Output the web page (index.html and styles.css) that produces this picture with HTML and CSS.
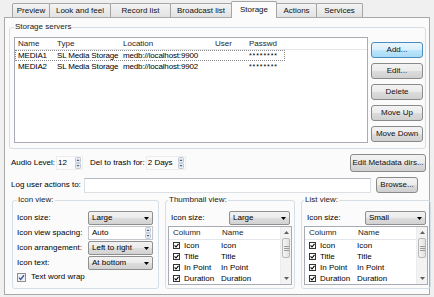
FILE: index.html
```html
<!DOCTYPE html>
<html>
<head>
<meta charset="utf-8">
<link rel="stylesheet" href="styles.css">
</head>
<body>
<div class="tabbar">
  <div class="tab t1">Preview</div>
  <div class="tab t2">Look and feel</div>
  <div class="tab t3">Record list</div>
  <div class="tab t4">Broadcast list</div>
  <div class="tab t5 active">Storage</div>
  <div class="tab t6">Actions</div>
  <div class="tab t7">Services</div>
</div>
<div class="pane">
  <fieldset class="group storage">
    <legend>Storage servers</legend>
    <div class="storage-body">
      <div class="servers">
        <div class="srv-row srv-head">
          <span>Name</span><span>Type</span><span>Location</span><span>User</span><span>Passwd</span>
        </div>
        <div class="srv-row current">
          <span>MEDIA1</span><span>SL Media Storage</span><span>medb://localhost:9900</span><span></span><span class="pw">********</span>
        </div>
        <div class="srv-row">
          <span>MEDIA2</span><span>SL Media Storage</span><span>medb://localhost:9902</span><span></span><span class="pw">********</span>
        </div>
      </div>
      <div class="btn-col">
        <div class="btn default">Add...</div>
        <div class="btn">Edit...</div>
        <div class="btn">Delete</div>
        <div class="btn">Move Up</div>
        <div class="btn">Move Down</div>
      </div>
    </div>
  </fieldset>

  <div class="line audio-line">
    <span class="lbl audio-lbl">Audio Level:</span>
    <div class="spin s-audio">
      <span>12</span>
      <svg class="spin-arrows" width="6" height="12" viewBox="0 0 6 12"><rect x="0.5" y="0.5" width="5" height="5.2" rx="1" fill="#e9eef4" stroke="#bcc6d3"/><rect x="0.5" y="6.3" width="5" height="5.2" rx="1" fill="#e9eef4" stroke="#bcc6d3"/><path d="M1.5 4 L3 2.2 L4.5 4 Z" fill="#4b5b7a"/><path d="M1.5 8 L3 9.8 L4.5 8 Z" fill="#4b5b7a"/></svg>
    </div>
    <span class="lbl trash-lbl">Del to trash for:</span>
    <div class="spin s-trash">
      <span>2 Days</span>
      <svg class="spin-arrows" width="6" height="12" viewBox="0 0 6 12"><rect x="0.5" y="0.5" width="5" height="5.2" rx="1" fill="#e9eef4" stroke="#bcc6d3"/><rect x="0.5" y="6.3" width="5" height="5.2" rx="1" fill="#e9eef4" stroke="#bcc6d3"/><path d="M1.5 4 L3 2.2 L4.5 4 Z" fill="#4b5b7a"/><path d="M1.5 8 L3 9.8 L4.5 8 Z" fill="#4b5b7a"/></svg>
    </div>
    <div class="btn meta">Edit Metadata dirs...</div>
  </div>

  <div class="line log-line">
    <span class="lbl log-lbl">Log user actions to:</span>
    <div class="textinput"></div>
    <div class="btn browse">Browse...</div>
  </div>

  <div class="views">
    <fieldset class="group iconview">
      <legend>Icon view:</legend>
      <div class="form">
        <span class="lbl">Icon size:</span>
        <div class="combo"><span>Large</span><svg width="5" height="3" viewBox="0 0 5 3"><path d="M0 0H5L2.5 3Z" fill="#000"/></svg></div>
        <span class="lbl">Icon view spacing:</span>
        <div class="spinbox"><span>Auto</span><svg class="spin-arrows" width="6" height="12" viewBox="0 0 6 12"><rect x="0.5" y="0.5" width="5" height="5.2" rx="1" fill="#e9eef4" stroke="#bcc6d3"/><rect x="0.5" y="6.3" width="5" height="5.2" rx="1" fill="#e9eef4" stroke="#bcc6d3"/><path d="M1.5 4 L3 2.2 L4.5 4 Z" fill="#4b5b7a"/><path d="M1.5 8 L3 9.8 L4.5 8 Z" fill="#4b5b7a"/></svg></div>
        <span class="lbl">Icon arrangement:</span>
        <div class="combo"><span>Left to right</span><svg width="5" height="3" viewBox="0 0 5 3"><path d="M0 0H5L2.5 3Z" fill="#000"/></svg></div>
        <span class="lbl">Icon text:</span>
        <div class="combo"><span>At bottom</span><svg width="5" height="3" viewBox="0 0 5 3"><path d="M0 0H5L2.5 3Z" fill="#000"/></svg></div>
      </div>
      <div class="check-line">
        <svg width="9" height="9" viewBox="0 0 9 9"><rect x="0.5" y="0.5" width="8" height="8" fill="#eef1f6" stroke="#8e8f8f"/><path d="M2 4.6 L3.7 6.5 L7 2.2" fill="none" stroke="#3c5a9a" stroke-width="1.4"/></svg>
        <span>Text word wrap</span>
      </div>
    </fieldset>

    <fieldset class="group subview">
      <legend>Thumbnail view:</legend>
      <div class="size-line">
        <span class="lbl">Icon size:</span>
        <div class="combo small-combo"><span>Large</span><svg width="5" height="3" viewBox="0 0 5 3"><path d="M0 0H5L2.5 3Z" fill="#000"/></svg></div>
      </div>
      <div class="coltable">
        <div class="ct-main">
          <div class="ct-row ct-head"><span>Column</span><span>Name</span></div>
          <div class="ct-row"><span><svg class="cb" width="7" height="7" viewBox="0 0 7 7"><rect x="0.5" y="0.5" width="6" height="6" fill="#fff" stroke="#333"/><path d="M1.6 3.4 L3 5 L5.5 1.8" fill="none" stroke="#000" stroke-width="1.1"/></svg>Icon</span><span>Icon</span></div>
          <div class="ct-row"><span><svg class="cb" width="7" height="7" viewBox="0 0 7 7"><rect x="0.5" y="0.5" width="6" height="6" fill="#fff" stroke="#333"/><path d="M1.6 3.4 L3 5 L5.5 1.8" fill="none" stroke="#000" stroke-width="1.1"/></svg>Title</span><span>Title</span></div>
          <div class="ct-row"><span><svg class="cb" width="7" height="7" viewBox="0 0 7 7"><rect x="0.5" y="0.5" width="6" height="6" fill="#fff" stroke="#333"/><path d="M1.6 3.4 L3 5 L5.5 1.8" fill="none" stroke="#000" stroke-width="1.1"/></svg>In Point</span><span>In Point</span></div>
          <div class="ct-row"><span><svg class="cb" width="7" height="7" viewBox="0 0 7 7"><rect x="0.5" y="0.5" width="6" height="6" fill="#fff" stroke="#333"/><path d="M1.6 3.4 L3 5 L5.5 1.8" fill="none" stroke="#000" stroke-width="1.1"/></svg>Duration</span><span>Duration</span></div>
        </div>
        <div class="vscroll">
          <div class="sb-btn"><svg width="5" height="3" viewBox="0 0 5 3"><path d="M0 3H5L2.5 0Z" fill="#606060"/></svg></div>
          <div class="sb-thumb"><svg width="5" height="5" viewBox="0 0 5 5"><path d="M0 0.5H5M0 2.5H5M0 4.5H5" stroke="#9a9a9a"/></svg></div>
          <div class="sb-track"></div>
          <div class="sb-btn"><svg width="5" height="3" viewBox="0 0 5 3"><path d="M0 0H5L2.5 3Z" fill="#606060"/></svg></div>
        </div>
      </div>
    </fieldset>

    <fieldset class="group subview">
      <legend>List view:</legend>
      <div class="size-line">
        <span class="lbl">Icon size:</span>
        <div class="combo small-combo"><span>Small</span><svg width="5" height="3" viewBox="0 0 5 3"><path d="M0 0H5L2.5 3Z" fill="#000"/></svg></div>
      </div>
      <div class="coltable">
        <div class="ct-main">
          <div class="ct-row ct-head"><span>Column</span><span>Name</span></div>
          <div class="ct-row"><span><svg class="cb" width="7" height="7" viewBox="0 0 7 7"><rect x="0.5" y="0.5" width="6" height="6" fill="#fff" stroke="#333"/><path d="M1.6 3.4 L3 5 L5.5 1.8" fill="none" stroke="#000" stroke-width="1.1"/></svg>Icon</span><span>Icon</span></div>
          <div class="ct-row"><span><svg class="cb" width="7" height="7" viewBox="0 0 7 7"><rect x="0.5" y="0.5" width="6" height="6" fill="#fff" stroke="#333"/><path d="M1.6 3.4 L3 5 L5.5 1.8" fill="none" stroke="#000" stroke-width="1.1"/></svg>Title</span><span>Title</span></div>
          <div class="ct-row"><span><svg class="cb" width="7" height="7" viewBox="0 0 7 7"><rect x="0.5" y="0.5" width="6" height="6" fill="#fff" stroke="#333"/><path d="M1.6 3.4 L3 5 L5.5 1.8" fill="none" stroke="#000" stroke-width="1.1"/></svg>In Point</span><span>In Point</span></div>
          <div class="ct-row"><span><svg class="cb" width="7" height="7" viewBox="0 0 7 7"><rect x="0.5" y="0.5" width="6" height="6" fill="#fff" stroke="#333"/><path d="M1.6 3.4 L3 5 L5.5 1.8" fill="none" stroke="#000" stroke-width="1.1"/></svg>Duration</span><span>Duration</span></div>
        </div>
        <div class="vscroll">
          <div class="sb-btn"><svg width="5" height="3" viewBox="0 0 5 3"><path d="M0 3H5L2.5 0Z" fill="#606060"/></svg></div>
          <div class="sb-thumb"><svg width="5" height="5" viewBox="0 0 5 5"><path d="M0 0.5H5M0 2.5H5M0 4.5H5" stroke="#9a9a9a"/></svg></div>
          <div class="sb-track"></div>
          <div class="sb-btn"><svg width="5" height="3" viewBox="0 0 5 3"><path d="M0 0H5L2.5 3Z" fill="#606060"/></svg></div>
        </div>
      </div>
    </fieldset>
  </div>
</div>
</body>
</html>
```

FILE: styles.css
```css
* { box-sizing: border-box; }
html, body { margin: 0; padding: 0; }
body {
  width: 434px;
  height: 297px;
  overflow: hidden;
  background: #f0f0f0;
  font-family: "Liberation Sans", Arial, sans-serif;
  font-size: 8px;
  line-height: 10px;
  color: #000;
}

/* ---------- tabs ---------- */
.tabbar {
  display: flex;
  align-items: flex-start;
  height: 17px;
  padding: 3px 0 0 12px;
  position: relative;
  z-index: 2;
}
.tab {
  height: 14px;
  margin-right: -1px;
  border: 1px solid #a5a5a5;
  border-bottom: none;
  border-radius: 2px 2px 0 0;
  background: linear-gradient(#f4f4f4, #e2e2e2);
  text-align: center;
  line-height: 13px;
  color: #111;
  flex-shrink: 0;
}
.t1 { width: 38px; }
.t2 { width: 62px; }
.t3 { width: 61px; }
.t4 { width: 62px; }
.t5 { width: 46px; }
.t6 { width: 41px; }
.t7 { width: 47px; }
.tab.active {
  height: 17px;
  margin-top: -2px;
  background: #fbfbfb;
  line-height: 15px;
}

/* ---------- pane ---------- */
.pane {
  margin-left: 4px;
  width: 426px;
  height: 278px;
  border: 1px solid #a9a9a9;
  background: #fbfbfb;
  padding: 4px 3px 0 4px;
  position: relative;
  z-index: 1;
}

.group {
  margin: 0;
  border: 1px solid #d5dfe5;
  border-radius: 3px;
  padding: 0 4px;
  min-width: 0;
}
.group legend {
  padding: 0 1px;
  line-height: 10px;
  color: #1a1a1a;
}

/* storage */
.storage { width: 417px; height: 127px; padding: 5px 2px 0 4px; }
.storage-body { display: flex; gap: 3px; }
.servers {
  width: 354px;
  height: 106px;
  border: 1px solid #a7abb3;
  background: #fff;
}
.srv-row {
  display: grid;
  grid-template-columns: 39px 66px 92px 34px 38px;
  height: 11px;
  line-height: 11px;
  white-space: nowrap;
  letter-spacing: -0.15px;
}
.srv-row span { padding-left: 3px; overflow: hidden; }
.srv-head {
  height: 12px;
  line-height: 12px;
  border-bottom: 1px solid #e3e6ea;
  color: #1e1e1e;
  letter-spacing: 0;
}
.srv-row.current {
  width: 270px;
  outline: 1px dotted #8a8a8a;
  outline-offset: -1px;
}
.srv-row .pw { letter-spacing: 0.9px; font-size: 7px; }

.btn-col {
  display: flex;
  flex-direction: column;
  gap: 5px;
  padding-top: 5px;
}
.btn {
  width: 52px;
  height: 16px;
  border: 1px solid #8a8a8a;
  border-radius: 3px;
  background: linear-gradient(#f3f3f3 0%, #ebebeb 48%, #dcdcdc 52%, #d0d0d0 100%);
  display: flex;
  align-items: center;
  justify-content: center;
  color: #111;
  white-space: nowrap;
  flex-shrink: 0;
}
.btn.default {
  border-color: #4a8ec0;
  background: linear-gradient(#eaf6fd 0%, #d9f0fc 48%, #bee6fd 52%, #a9daf5 100%);
}

/* audio line */
.line { display: flex; align-items: center; }
.lbl { white-space: nowrap; flex-shrink: 0; }
.audio-line { margin-top: 5px; height: 18px; padding-left: 2px; }
.audio-lbl { margin-right: 1px; }
.spin {
  display: flex;
  align-items: center;
  justify-content: space-between;
  height: 14px;
  padding: 0 1px 0 1px;
  border: 1px solid #ededed;
  flex-shrink: 0;
}
.s-audio { width: 27px; }
.trash-lbl { margin-left: 7px; margin-right: 1px; }
.s-trash { width: 40px; }
.btn.meta { width: 76px; height: 18px; margin-left: auto; }

/* log line */
.log-line { margin-top: 5px; height: 16px; padding-left: 2px; }
.log-lbl { width: 73px; }
.textinput {
  width: 287px;
  height: 15px;
  border: 1px solid #dcdfe4;
  border-top-color: #b5b9c0;
  background: #fff;
}
.btn.browse { width: 42px; margin-left: 5px; }

/* views */
.views {
  display: flex;
  gap: 6px;
  margin-top: 2px;
  padding-left: 3px;
}
.views .group { flex-shrink: 0; height: 94px; }
.iconview { width: 147px; padding: 6px 4px 0 4px; }
.form {
  display: grid;
  grid-template-columns: 71px 65px;
  grid-auto-rows: 14px;
  row-gap: 1px;
  align-items: center;
}
.combo {
  height: 14px;
  border: 1px solid #8f8f8f;
  border-radius: 2px;
  background: linear-gradient(#f2f2f2 0%, #ebebeb 48%, #dddddd 52%, #d2d2d2 100%);
  display: flex;
  align-items: center;
  justify-content: space-between;
  padding: 0 3px;
}
.spinbox {
  height: 14px;
  border: 1px solid #c3c7cc;
  background: #fff;
  display: flex;
  align-items: center;
  justify-content: space-between;
  padding: 0 1px 0 3px;
}
.check-line {
  display: flex;
  align-items: center;
  gap: 5px;
  height: 12px;
  margin-top: 1px;
}

.subview { width: 130px; padding: 6px 2px 0 2px; }
.size-line {
  display: flex;
  align-items: center;
  height: 14px;
  padding: 0 1px 0 3px;
}
.size-line .lbl { width: 58px; }
.small-combo { width: 61px; }
.coltable {
  margin-top: 1px;
  height: 59px;
  border: 1px solid #a7abb3;
  background: #fff;
  display: flex;
}
.ct-main { flex: 1; }
.ct-row {
  display: grid;
  grid-template-columns: 50px 1fr;
  height: 11px;
  line-height: 11px;
  white-space: nowrap;
}
.ct-row span { display: flex; align-items: center; padding-left: 4px; }
.ct-row span + span { padding-left: 2px; }
.ct-head {
  height: 13px;
  line-height: 12px;
  border-bottom: 1px solid #e3e6ea;
  color: #1e1e1e;
}
.ct-head span + span { padding-left: 3px; }
.cb { margin-right: 4px; flex-shrink: 0; }

.vscroll {
  width: 11px;
  display: flex;
  flex-direction: column;
  background: #f3f3f3;
  border-left: 1px solid #ececec;
}
.sb-btn {
  height: 11px;
  display: flex;
  align-items: center;
  justify-content: center;
}
.sb-thumb {
  height: 20px;
  margin: 0 1px;
  border: 1px solid #b8b8b8;
  border-radius: 2px;
  background: linear-gradient(90deg, #f4f4f4, #e2e2e2);
  display: flex;
  align-items: center;
  justify-content: center;
}
.sb-track { flex: 1; }
```
